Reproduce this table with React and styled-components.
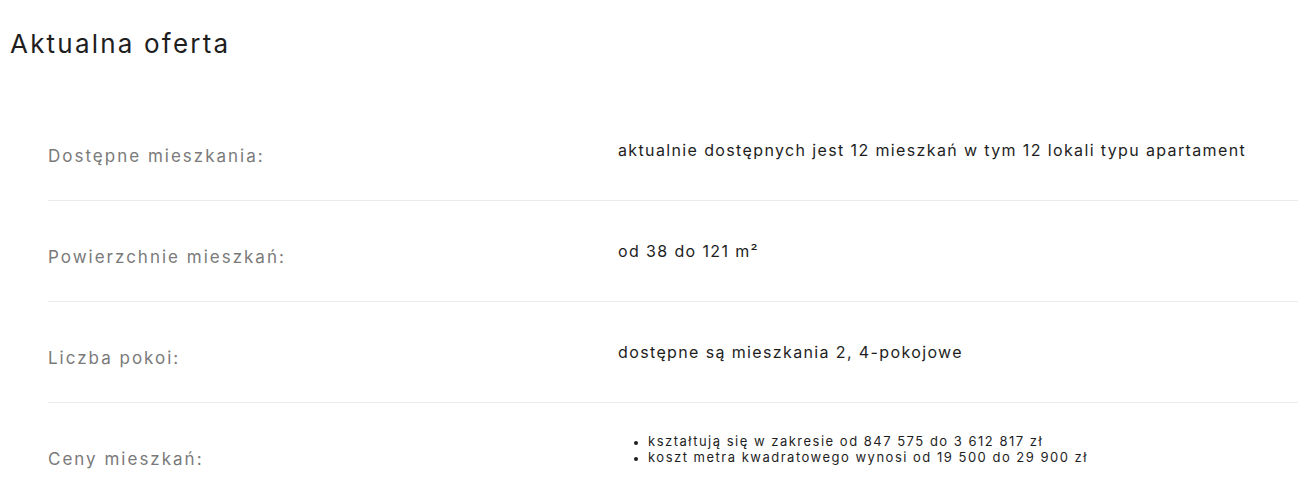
import React from 'react';
import styled, { createGlobalStyle } from 'styled-components';

const GlobalStyle = createGlobalStyle`
  body {
    margin: 0;
    background: #fff;
    font-family: "Inter", "Open Sans", sans-serif;
  }
`;

const offer = [
  { label: 'Dostępne mieszkania:', value: 'aktualnie dostępnych jest 12 mieszkań w tym 12 lokali typu apartament' },
  { label: 'Powierzchnie mieszkań:', value: 'od 38 do 121 m²' },
  { label: 'Liczba pokoi:', value: 'dostępne są mieszkania 2, 4-pokojowe' },
  {
    label: 'Ceny mieszkań:',
    list: [
      'kształtują się w zakresie od 847 575 do 3 612 817 zł',
      'koszt metra kwadratowego wynosi od 19 500 do 29 900 zł',
    ],
  },
];

const App = () => {
  return (
    <>
      <GlobalStyle />
      <Section>
        <Title>Aktualna oferta</Title>
        <Table>
          {offer.map(row => (
            <Row key={row.label}>
              <Label>{row.label}</Label>
              {row.list ? (
                <List>
                  {row.list.map(item => (
                    <li key={item}>{item}</li>
                  ))}
                </List>
              ) : (
                <Value>{row.value}</Value>
              )}
            </Row>
          ))}
        </Table>
      </Section>
    </>
  );
};

const Section = styled.section`
  padding: 26px 1px 0 10px;
`;

const Title = styled.h2`
  margin: 0;
  font-size: 26px;
  line-height: 36px;
  font-weight: 400;
  letter-spacing: 2.2px;
  color: #1e1e1e;
`;

const Table = styled.div`
  margin: 38px 0 0 38px;
`;

const Row = styled.div`
  display: grid;
  grid-template-columns: 570px 1fr;
  align-items: center;
  height: 100px;

  &:not(:last-of-type) {
    border-bottom: 1px solid #ebebeb;
  }
`;

const Label = styled.div`
  padding-top: 12px;
  font-size: 17px;
  letter-spacing: 2px;
  color: #7a7a7a;
`;

const Value = styled.div`
  font-size: 16px;
  letter-spacing: 1.37px;
  color: #1e1e1e;
`;

const List = styled.ul`
  margin: 0 0 8px;
  padding-left: 30px;
  font-size: 13px;
  line-height: 16px;
  letter-spacing: 1.5px;
  color: #1e1e1e;

  li::marker {
    font-size: 11px;
  }
`;

export default App;
